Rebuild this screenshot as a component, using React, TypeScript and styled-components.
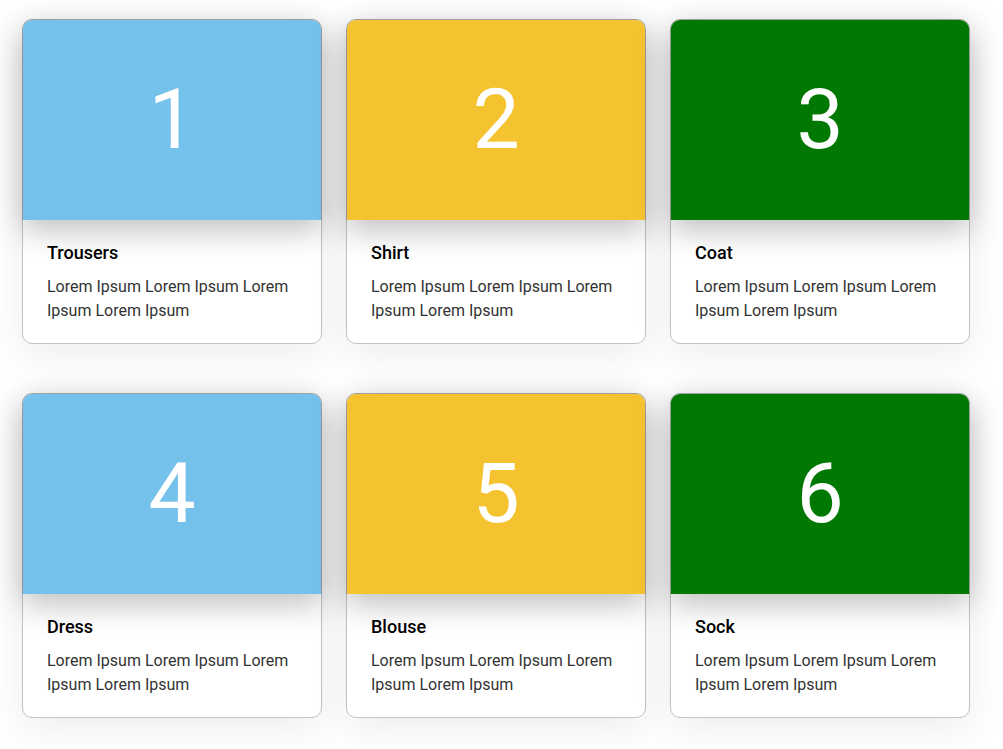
import React from "react";
import styled, { createGlobalStyle } from "styled-components";

const Global = createGlobalStyle`
  html, body { margin: 0; padding: 0; background: #ffffff; }
  body { font-family: Roboto, "Liberation Sans", Arial, sans-serif; }
  * { box-sizing: border-box; }
`;

const Grid = styled.div`
  display: grid;
  grid-template-columns: repeat(3, 300px);
  column-gap: 24px;
  row-gap: 49px;
  padding: 19px 0 30px 22px;
`;

const Card = styled.div`
  width: 300px;
  height: 325px;
  border: 1px solid #c2c2c2;
  border-radius: 10px;
  background: #ffffff;
  display: flex;
  flex-direction: column;
  box-shadow: 0 12px 40px rgba(0, 0, 0, 0.07);
`;

const Media = styled.div<{ $bg: string }>`
  position: relative;
  z-index: 1;
  margin: -1px -1px 0 -1px;
  height: 201px;
  border-radius: 10px 10px 0 0;
  border: 1px solid rgba(0, 0, 0, 0.12);
  border-bottom: none;
  background: ${(p) => p.$bg};
  background-clip: padding-box;
  display: flex;
  align-items: center;
  justify-content: center;
  color: #ffffff;
  font-family: Roboto, "Liberation Sans", Arial, sans-serif;
  font-size: 84px;
  font-weight: 400;
  line-height: 1;
  box-shadow: 0 10px 32px rgba(0, 0, 0, 0.26);
`;

const Body = styled.div`
  flex: 1;
  padding: 22px 24px 0 24px;
  border-radius: 0 0 10px 10px;
`;

const Title = styled.h3`
  margin: 0 0 11px 0;
  font-size: 18px;
  font-weight: 500;
  line-height: 22px;
  color: #000000;
`;

const Text = styled.p`
  margin: 0;
  font-size: 16px;
  line-height: 24px;
  color: #333333;
`;

const items = [
  { n: 1, title: "Trousers", color: "#74c1ec" },
  { n: 2, title: "Shirt", color: "#f5c32f" },
  { n: 3, title: "Coat", color: "#017801" },
  { n: 4, title: "Dress", color: "#74c1ec" },
  { n: 5, title: "Blouse", color: "#f5c32f" },
  { n: 6, title: "Sock", color: "#017801" },
];

export default function App() {
  return (
    <>
      <Global />
      <Grid>
        {items.map((it) => (
          <Card key={it.n}>
            <Media $bg={it.color}>{it.n}</Media>
            <Body>
              <Title>{it.title}</Title>
              <Text>Lorem Ipsum Lorem Ipsum Lorem Ipsum Lorem Ipsum</Text>
            </Body>
          </Card>
        ))}
      </Grid>
    </>
  );
}
